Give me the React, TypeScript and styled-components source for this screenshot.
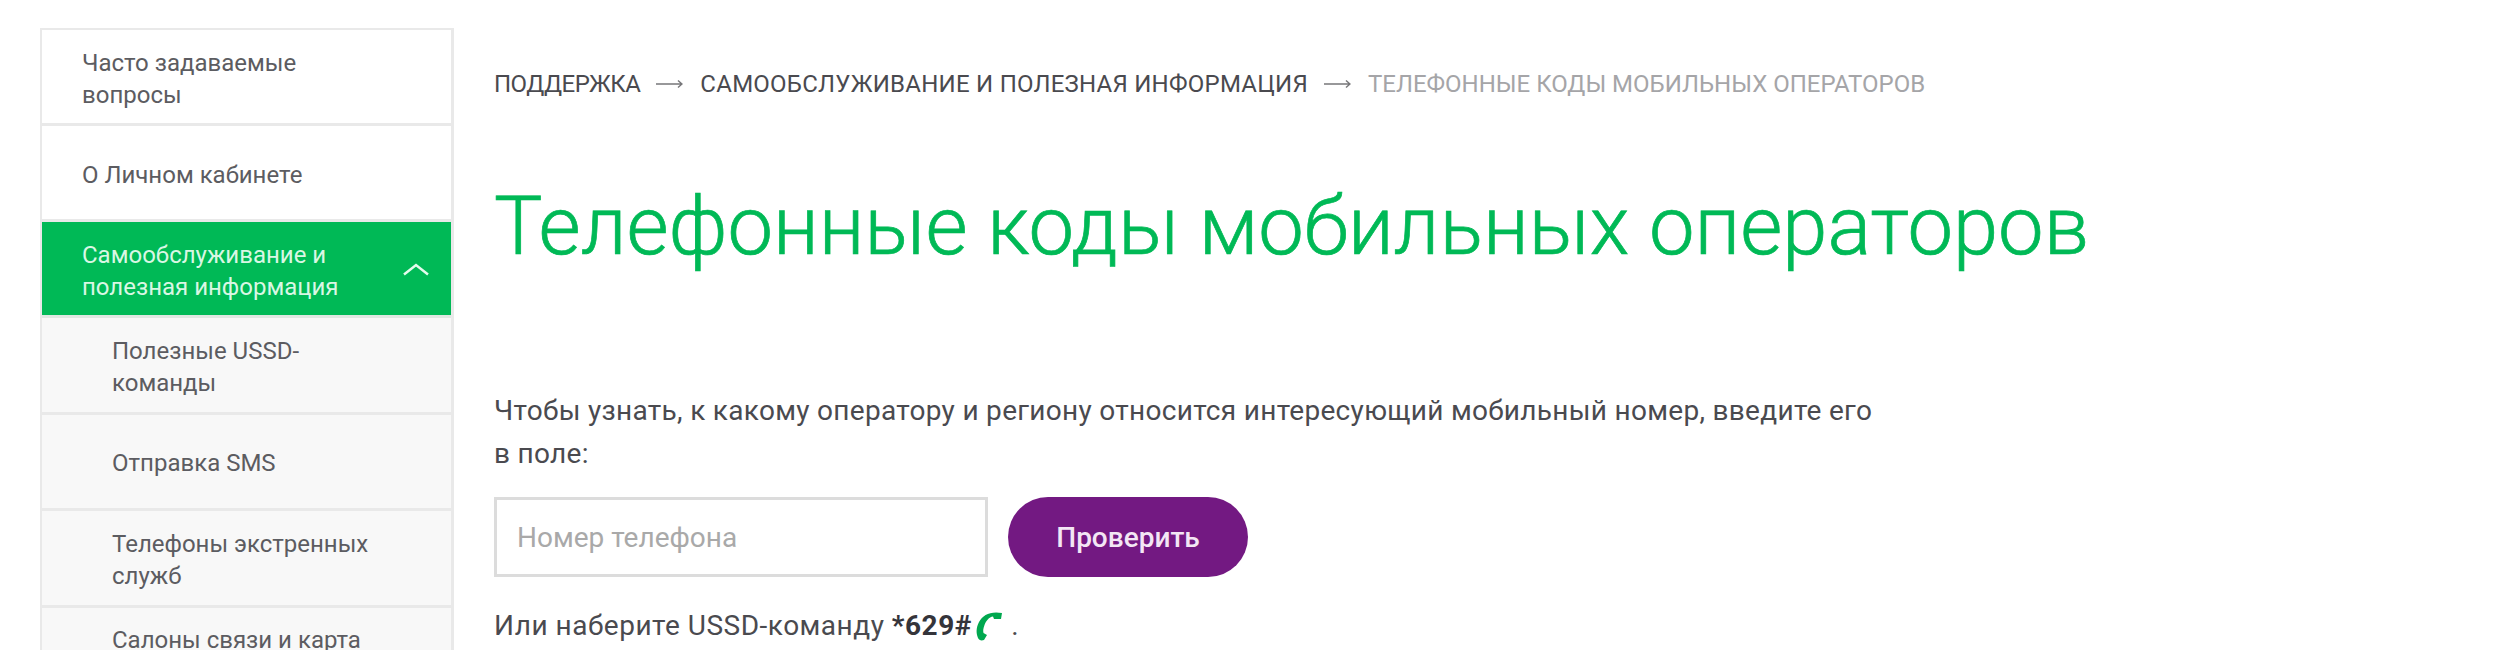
import React from "react";
import styled, { createGlobalStyle } from "styled-components";

const Global = createGlobalStyle`
  html, body { margin: 0; padding: 0; background: #fff; overflow: hidden; }
  body { font-family: Roboto, "Liberation Sans", sans-serif; color: #3c3c3c; }
`;

const Page = styled.div`
  width: 2502px;
  height: 650px;
  overflow: hidden;
  display: flex;
  align-items: flex-start;
  padding: 28px 0 0 40px;
  box-sizing: border-box;
`;

const Sidebar = styled.nav`
  width: 414px;
  flex: none;
  border: solid #e9e9e9;
  border-width: 2px 3px 0 2px;
  box-sizing: border-box;
  display: flex;
  flex-direction: column;
`;

const MenuItem = styled.a<{ $sub?: boolean; $active?: boolean }>`
  display: flex;
  align-items: center;
  justify-content: space-between;
  flex: none;
  height: ${(p) => (p.$sub ? "96.5px" : "96px")};
  box-sizing: border-box;
  padding: ${(p) => (p.$sub ? "4px 50px 0 70px" : p.$active ? "4px 22px 0 40px" : "4px 100px 0 40px")};
  font-size: 24px;
  line-height: 32px;
  color: ${(p) => (p.$active ? "#d9f7e4" : "#5c5c61")};
  background: ${(p) => (p.$active ? "#00b956" : p.$sub ? "#f8f8f8" : "#fff")};
  border-bottom: 3px solid ${(p) => (p.$active ? "#dfe8e2" : "#e9e9e9")};
`;

const Chevron = styled.svg`
  flex: none;
  margin-top: -4px;
`;

const Content = styled.main`
  margin-left: 40px;
  width: 1400px;
  display: flex;
  flex-direction: column;
  align-items: flex-start;
`;

const Crumbs = styled.div`
  display: flex;
  align-items: center;
  margin-top: 41px;
  height: 30px;
  font-size: 24px;
  text-transform: uppercase;
  color: #4a4a4f;
  white-space: nowrap;
`;

const CrumbLink = styled.span<{ $spacing?: string }>`
  letter-spacing: ${(p) => p.$spacing ?? "0"};
`;

const CrumbArrow = styled.svg`
  width: 27px;
  height: 10px;
  margin: 0 17px 0 16px;
  flex: none;
`;

const CrumbCurrent = styled.span`
  color: #a5a5a8;
`;

const Title = styled.h1`
  margin: 83px 0 0;
  font-size: 81.3px;
  line-height: 90px;
  font-weight: 300;
  -webkit-text-stroke: 0.7px #00b956;
  color: #00b956;
  white-space: nowrap;
`;

const Intro = styled.p`
  margin: 117px 0 0;
  width: 1385px;
  font-size: 28px;
  letter-spacing: 0.3px;
  line-height: 43px;
  color: #4a4a4f;
`;

const Form = styled.div`
  display: flex;
  align-items: stretch;
  gap: 20px;
  margin-top: 22px;
`;

const PhoneInput = styled.div`
  width: 494px;
  height: 80px;
  box-sizing: border-box;
  border: 3px solid #dcdcdc;
  padding-left: 20px;
  display: flex;
  align-items: center;
  font-size: 28px;
  color: #a9a9a9;
`;

const CheckButton = styled.button`
  width: 240px;
  height: 80px;
  border: 0;
  border-radius: 40px;
  background: #731982;
  color: #f3e6f5;
  font: 500 28px Roboto, sans-serif;
`;

const Ussd = styled.p`
  margin: 33px 0 0;
  font-size: 28px;
  letter-spacing: 0.5px;
  line-height: 32px;
  color: #4a4a4f;
  display: flex;
  align-items: center;
  white-space: pre;
`;

const Code = styled.b`
  color: #34343a;
  font-weight: 700;
`;

const Phone = styled.svg`
  width: 27px;
  height: 30px;
  margin: 0 2px 0 3px;
  flex: none;
`;

const top = ["Часто задаваемые вопросы", "О Личном кабинете"];
const subs = ["Полезные USSD-команды", "Отправка SMS", "Телефоны экстренных служб", "Салоны связи и карта покрытия"];

const Arrow = () => (
  <CrumbArrow viewBox="0 0 27 10" fill="none" stroke="#77777a" strokeWidth="1.5">
    <path d="M0 5h26M22 1.5 26 5l-4 3.5" />
  </CrumbArrow>
);

export default function App() {
  return (
    <Page>
      <Global />
      <Sidebar>
        {top.map((t) => (
          <MenuItem key={t}><span>{t}</span></MenuItem>
        ))}
        <MenuItem $active>
          <span>Самообслуживание и<br />полезная информация</span>
          <Chevron width="26" height="14" viewBox="0 0 26 14" fill="none" stroke="#e4fbed" strokeWidth="2.5">
            <path d="M1 12.5 13 3l12 9.5" />
          </Chevron>
        </MenuItem>
        {subs.map((t) => (
          <MenuItem $sub key={t}><span>{t}</span></MenuItem>
        ))}
      </Sidebar>
      <Content>
        <Crumbs>
          <CrumbLink $spacing="-0.5px">Поддержка</CrumbLink>
          <Arrow />
          <CrumbLink $spacing="0.25px">Самообслуживание и полезная информация</CrumbLink>
          <Arrow />
          <CrumbCurrent>Телефонные коды мобильных операторов</CrumbCurrent>
        </Crumbs>
        <Title>Телефонные коды мобильных операторов</Title>
        <Intro>Чтобы узнать, к какому оператору и региону относится интересующий мобильный номер, введите его в поле:</Intro>
        <Form>
          <PhoneInput>Номер телефона</PhoneInput>
          <CheckButton>Проверить</CheckButton>
        </Form>
        <Ussd>
          Или наберите USSD-команду <Code>*629#</Code>
          <Phone viewBox="0 0 27 30">
            <path fill="#00a84f" d="M27 2 26 8 19 8 18 5.5C14 6 11 10 9.500 14 8 18 8 20 8.500 22L12 24 9 29C6 30 4 29 3 27 1 22 1 17 4 11 8 4 15 0 27 2Z" />
          </Phone>
          {" ."}
        </Ussd>
      </Content>
    </Page>
  );
}
